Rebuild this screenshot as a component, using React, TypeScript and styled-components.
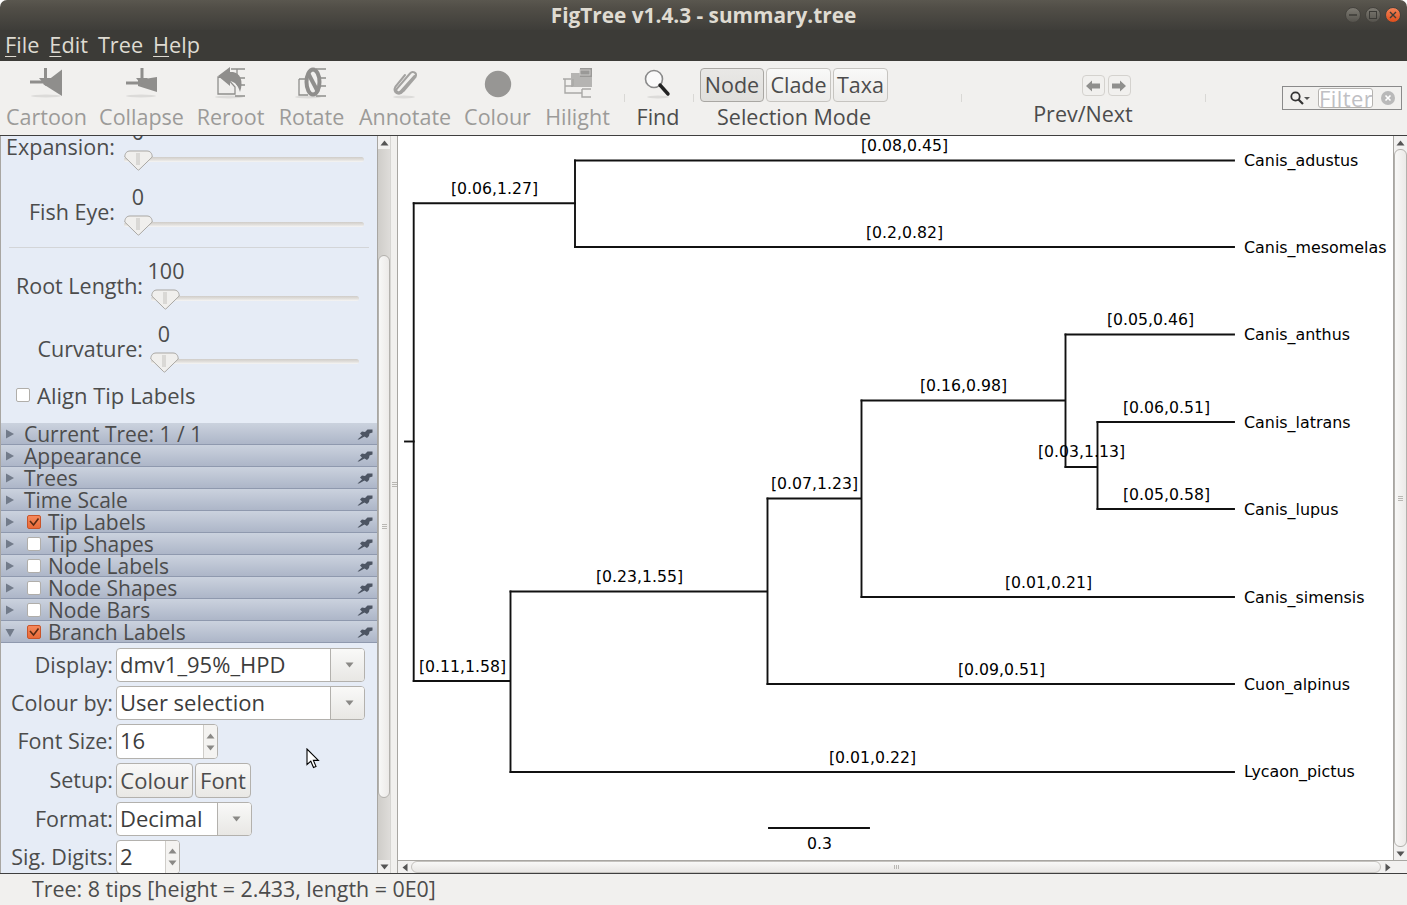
import React from "react";
import styled, { createGlobalStyle } from "styled-components";

const UI_FONT = `"Open Sans", "Noto Sans", "Liberation Sans", sans-serif`;

const GlobalStyle = createGlobalStyle`
  html, body {
    margin: 0;
    padding: 0;
    background: #fff;
    overflow: hidden;
  }
  * { box-sizing: border-box; }
`;

const Window = styled.div`
  width: 1407px;
  height: 905px;
  display: flex;
  flex-direction: column;
  position: relative;
  font-family: ${UI_FONT};
  color: #4c4c4c;
  background: #f1f0ee;
  border-radius: 7px 7px 0 0;
  overflow: hidden;
`;

const TitleBar = styled.div`
  height: 30px;
  flex: none;
  display: flex;
  align-items: center;
  justify-content: center;
  position: relative;
  padding-bottom: 1px;
  background: linear-gradient(#5a574f 0, #514e47 8px, #3e3d39 30px);
  color: #dfdbd2;
  font-size: 20.8px;
  font-weight: 700;
`;

const WindowButtons = styled.div`
  position: absolute;
  right: 6px;
  top: 7px;
  display: flex;
  gap: 4px;
`;

const WindowButton = styled.div<{ $close?: boolean }>`
  width: 16px;
  height: 16px;
  border-radius: 50%;
  display: flex;
  align-items: center;
  justify-content: center;
  border: 1px solid #45433e;
  background: ${(p) =>
    p.$close
      ? "linear-gradient(#f28257, #df4f1c)"
      : "linear-gradient(#7d7a72, #55534d)"};
`;

const MenuBar = styled.div`
  height: 31px;
  flex: none;
  display: flex;
  align-items: center;
  padding: 0 0 2px 5px;
  gap: 10px;
  background: #3c3b37;
  color: #dfdbd2;
  font-size: 21.7px;
`;

const MenuItem = styled.span`
  u { text-underline-offset: 3px; text-decoration-thickness: 1px; }
`;

const Toolbar = styled.div`
  height: 75px;
  flex: none;
  display: flex;
  align-items: stretch;
  background: #f1f0ee;
  border-bottom: 1px solid #3f3f3f;
  padding-left: 7px;
`;

const ToolItem = styled.div<{ $w: number; $ml?: number; $off?: boolean }>`
  width: ${(p) => p.$w}px;
  margin-left: ${(p) => p.$ml ?? 0}px;
  flex: none;
  display: flex;
  flex-direction: column;
  align-items: center;
  color: ${(p) => (p.$off ? "#9c9b99" : "#4c4c4c")};
  font-size: 21.5px;
  white-space: nowrap;
`;

const ToolIcon = styled.div`
  height: 38px;
  display: flex;
  align-items: flex-end;
  justify-content: center;
`;

const ToolLabel = styled.div`
  height: 29px;
  line-height: 29px;
  margin-top: 3px;
`;

const ToolSep = styled.div<{ $ml: number }>`
  width: 1px;
  height: 8px;
  margin: 33px 0 0 ${(p) => p.$ml}px;
  background: #d9d8d5;
  flex: none;
`;

const SegmentRow = styled.div`
  display: flex;
  gap: 2px;
  height: 34px;
  margin: 7px 0 -3px;
`;

const SegmentButton = styled.div<{ $w: number; $active?: boolean }>`
  width: ${(p) => p.$w}px;
  display: flex;
  align-items: center;
  justify-content: center;
  padding-bottom: 2px;
  border-radius: 4px;
  border: 1px solid ${(p) => (p.$active ? "#a9a7a3" : "#c6c4c0")};
  background: ${(p) =>
    p.$active ? "linear-gradient(#e9e8e6, #e0dfdc)" : "linear-gradient(#f9f9f8, #ecebe9)"};
`;

const NavRow = styled.div`
  display: flex;
  gap: 3px;
  height: 21px;
  margin: 14px 0 0 46px;
`;

const NavButton = styled.div`
  width: 23px;
  border: 1px solid #d4d2ce;
  border-radius: 4px;
  display: flex;
  align-items: center;
  justify-content: center;
  background: #f1f0ee;
`;

const FilterBox = styled.div`
  width: 120px;
  height: 24px;
  margin: 25px 0 0 76px;
  flex: none;
  border: 1px solid #8a8a8a;
  display: flex;
  align-items: center;
  padding-left: 6px;
`;

const FilterField = styled.div`
  width: 55px;
  height: 20px;
  margin-left: 7px;
  border: 1px solid #b5b3b0;
  border-radius: 3px;
  background: #fff;
  color: #c0c0c4;
  font-size: 22px;
  line-height: 18px;
  overflow: hidden;
  letter-spacing: 0.4px;
`;

const ClearIcon = styled.svg`
  margin-left: 8px;
  flex: none;
`;

const Body = styled.div`
  height: 737px;
  flex: none;
  display: flex;
`;

const Sidebar = styled.div`
  width: 377px;
  flex: none;
  background: #e6ecf6;
  border-left: 1px solid #a8a6a2;
  overflow: hidden;
  font-size: 21.5px;
`;

const SliderRow = styled.div<{ $h: number; $top?: number }>`
  display: flex;
  align-items: flex-start;
  height: ${(p) => p.$h}px;
  margin-top: ${(p) => p.$top ?? 0}px;
`;

const SliderLabel = styled.div<{ $w: number }>`
  width: ${(p) => p.$w}px;
  flex: none;
  text-align: right;
  margin-top: 15px;
  line-height: 26px;
  white-space: nowrap;
`;

const SliderCol = styled.div<{ $ml: number; $w: number }>`
  margin-left: ${(p) => p.$ml}px;
  width: ${(p) => p.$w}px;
  flex: none;
`;

const SliderValue = styled.div<{ $at: number }>`
  height: 26px;
  line-height: 26px;
  width: 28px;
  margin-left: ${(p) => p.$at}px;
  display: flex;
  justify-content: center;
`;

const SliderTrack = styled.div`
  height: 28px;
  display: flex;
  align-items: center;
  position: relative;
  &::before {
    content: "";
    height: 5px;
    width: 100%;
    border-radius: 3px;
    background: linear-gradient(#cfccc8, #e4e2df 60%, #f6f6f6);
  }
`;

const SliderThumb = styled.svg<{ $at: number }>`
  position: absolute;
  left: ${(p) => p.$at}px;
  top: 5px;
`;

const Divider = styled.div`
  height: 1px;
  margin-left: 8px;
  width: 360px;
  background: #d3d5d8;
`;

const CheckRow = styled.div`
  height: 22px;
  margin-bottom: 17px;
  display: flex;
  align-items: center;
  padding-left: 15px;
  gap: 7px;
  font-size: 22px;
`;

const CheckBox = styled.span<{ $on?: boolean }>`
  width: 14px;
  height: 14px;
  flex: none;
  border-radius: 2px;
  border: 1px solid ${(p) => (p.$on ? "#c9542a" : "#b0aeaa")};
  background: ${(p) => (p.$on ? "linear-gradient(#f5895c, #ea6a38)" : "#fff")};
  display: flex;
  align-items: center;
  justify-content: center;
`;

const SectionHeader = styled.div`
  height: 22px;
  display: flex;
  align-items: center;
  padding: 0 4px 0 4px;
  background: linear-gradient(#cbd2de, #adb6c8);
  border-bottom: 1px solid #8f99ae;
  font-size: 21px;
  line-height: 22px;
  white-space: nowrap;
`;

const SectionTitle = styled.span<{ $check?: boolean }>`
  margin-left: ${(p) => (p.$check ? 7 : 9)}px;
  flex: 1;
`;

const HeaderCheck = styled.span`
  margin-left: 12px;
  display: flex;
`;

const FormBlock = styled.div`
  display: flex;
  flex-direction: column;
  gap: 4px;
  padding-top: 5px;
`;

const FormRow = styled.div<{ $h: number }>`
  display: flex;
  height: ${(p) => p.$h}px;
  flex: none;
`;

const FormLabel = styled.div`
  width: 112px;
  flex: none;
  text-align: right;
  margin-right: 3px;
  line-height: 34px;
  white-space: nowrap;
`;

const Combo = styled.div<{ $w: number }>`
  width: ${(p) => p.$w}px;
  border: 1px solid #b3b1ad;
  border-radius: 4px;
  background: #fff;
  display: flex;
  overflow: hidden;
`;

const ComboText = styled.div`
  flex: 1;
  padding-left: 3px;
  line-height: 31px;
  font-size: 22px;
  color: #3c3c3c;
  white-space: nowrap;
`;

const ComboArrow = styled.div`
  width: 34px;
  padding-left: 3px;
  border-left: 1px solid #b3b1ad;
  background: linear-gradient(#f9f9f8, #e8e7e4);
  display: flex;
  align-items: center;
  justify-content: center;
`;

const SpinUpDown = styled.div`
  width: 14px;
  border-left: 1px solid #cfcdc9;
  background: #f4f3f1;
  display: flex;
  flex-direction: column;
  align-items: center;
  justify-content: center;
  gap: 6px;
`;

const SmallButton = styled.div<{ $w: number }>`
  width: ${(p) => p.$w}px;
  border: 1px solid #b3b1ad;
  border-radius: 4px;
  margin-right: 2px;
  padding-bottom: 2px;
  font-size: 22px;
  background: linear-gradient(#f9f9f8, #e9e8e5);
  display: flex;
  align-items: center;
  justify-content: center;
`;

const ScrollV = styled.div<{ $w: number }>`
  width: ${(p) => p.$w}px;
  flex: none;
  display: flex;
  flex-direction: column;
  background: #f2f1f0;
  border-left: 1px solid #a8a6a2;
`;

const ScrollEnd = styled.div`
  height: 13px;
  flex: none;
  display: flex;
  align-items: center;
  justify-content: center;
  background: #f2f1f0;
`;

const ScrollTrack = styled.div`
  flex: 1;
  display: flex;
  flex-direction: column;
  background: linear-gradient(90deg, #cfcdc9, #dedcd9);
`;

const ScrollThumb = styled.div<{ $top: number; $h: number }>`
  margin-top: ${(p) => p.$top}px;
  height: ${(p) => p.$h}px;
  flex: none;
  border: 1px solid #b3b1ad;
  border-radius: 6px;
  background: linear-gradient(90deg, #f8f8f7, #eceae8);
  display: flex;
  flex-direction: column;
  align-items: center;
  justify-content: center;
  gap: 1px;
`;

const GripMark = styled.span`
  width: 5px;
  height: 1px;
  background: #b9b7b3;
`;

const Splitter = styled.div`
  width: 7px;
  flex: none;
  background: #f1f0ee;
  border-left: 1px solid #d6d5d2;
  display: flex;
  flex-direction: column;
  align-items: center;
  justify-content: center;
  gap: 1px;
  padding-bottom: 40px;
`;

const MainPane = styled.div`
  flex: 1;
  display: flex;
  flex-direction: column;
  min-width: 0;
  border-left: 1px solid #a8a6a2;
`;

const CanvasRow = styled.div`
  flex: 1;
  display: flex;
  min-height: 0;
`;

const TreeCanvas = styled.svg`
  flex: 1;
  display: block;
  background: #fff;
  min-width: 0;
  font-family: "DejaVu Sans", sans-serif;
  font-size: 15.7px;
  fill: #000;
`;

const TipLabel = styled.text`
  font-size: 15.9px;
`;

const ScrollH = styled.div`
  height: 13px;
  flex: none;
  display: flex;
  background: #f2f1f0;
  border-top: 1px solid #a8a6a2;
  padding-right: 13px;
`;

const HEnd = styled.div`
  width: 13px;
  flex: none;
  display: flex;
  align-items: center;
  justify-content: center;
`;

const HThumb = styled.div`
  flex: 1;
  border: 1px solid #c4c2be;
  border-radius: 6px;
  background: linear-gradient(#f8f8f7, #e8e6e4);
  display: flex;
  align-items: center;
  justify-content: center;
  gap: 1px;
`;

const HGrip = styled.span`
  width: 1px;
  height: 4px;
  background: #b9b7b3;
`;

const StatusBar = styled.div`
  flex: 1;
  border-top: 1px solid #3f3f3f;
  padding-left: 32px;
  background: #f1f0ee;
  font-size: 21.4px;
  line-height: 30px;
`;

const Pointer = styled.svg`
  position: absolute;
  left: 306px;
  top: 748px;
`;

const GREY = "#8f8e8c";

const Shadow = ({ cx, cy, rx }: { cx: number; cy: number; rx: number }) => (
  <ellipse cx={cx} cy={cy} rx={rx} ry={1.5} fill="#dcdbd9" />
);

const CartoonIcon = () => (
  <svg width="36" height="32" viewBox="0 0 36 32">
    <Shadow cx={17} cy={29} rx={15} />
    <path d="M33 2.5 V29 L14 17 Z" fill={GREY} />
    <path d="M1 15 H15 M16.5 1 V14" stroke={GREY} strokeWidth="3" fill="none" />
    <path d="M10 11 H23 L16.5 19 Z" fill={GREY} />
  </svg>
);

const CollapseIcon = () => (
  <svg width="36" height="32" viewBox="0 0 36 32">
    <Shadow cx={17} cy={29} rx={15} />
    <path d="M33 10 V25 L14 19 L14 13 Z" fill={GREY} />
    <path d="M2 16 H15 M18 1 V13" stroke={GREY} strokeWidth="3" fill="none" />
    <path d="M12 11 H24 L18 18 Z" fill={GREY} />
  </svg>
);

const RerootIcon = () => (
  <svg width="36" height="32" viewBox="0 0 36 32">
    <Shadow cx={16} cy={30} rx={14} />
    <path d="M5 10 V27 H22 V20 L14 11 Z" fill="#efeeec" stroke={GREY} strokeWidth="1.3" />
    <path d="M18 2 H32 M24 11 H32 M24 18 H32 M22 29 H32 M24 2 V18" stroke={GREY} strokeWidth="1.3" fill="none" />
    <path d="M17 0 V5 H20 C27 6 31 14 27 25 C25 18 22 15 17 14 V19 L5 9 Z" fill={GREY} />
  </svg>
);

const RotateIcon = () => (
  <svg width="36" height="32" viewBox="0 0 36 32">
    <Shadow cx={14} cy={30} rx={13} />
    <path d="M5 12 H14 M5 12 V28 H14 M22 2 H32 M25 11 H32 M25 19 H32 M22 29 H32" stroke={GREY} strokeWidth="1.3" fill="none" />
    <ellipse cx="19" cy="15" rx="6.5" ry="12.5" fill="none" stroke={GREY} strokeWidth="4" />
    <path d="M14 6 L24 25" stroke={GREY} strokeWidth="4" />
  </svg>
);

const AnnotateIcon = () => (
  <svg width="30" height="32" viewBox="0 0 30 32">
    <Shadow cx={14} cy={30} rx={11} />
    <path
      d="M24.5 9 L11 24 C8.5 26.8 5 24.5 7 21.5 L20 6.5 C22.5 3.5 27.5 5.5 25.5 10 L13.5 24 C9.5 29 2 26 5.5 19.5 L15 8"
      stroke="#a3a2a0"
      strokeWidth="2"
      fill="none"
      strokeLinecap="round"
    />
  </svg>
);

const ColourIcon = () => (
  <svg width="28" height="30" viewBox="0 0 28 30">
    <circle cx="14" cy="15" r="13.2" fill="#979694" />
  </svg>
);

const HilightIcon = () => (
  <svg width="32" height="32" viewBox="0 0 32 32">
    <rect x="9" y="6" width="21" height="14" fill="#b5b4b2" />
    <rect x="18" y="1" width="12" height="9" fill="#9a9997" />
    <rect x="18" y="3" width="10" height="5" fill="none" stroke="#c9c8c6" strokeWidth="1" />
    <path d="M1 12 H9 M3 12 V26 H20 M3 19 H11 M20 22 H29 M20 22 V30 H29 M11 12 V19" stroke="#a9a8a6" strokeWidth="1.4" fill="none" />
  </svg>
);

const FindIcon = () => (
  <svg width="30" height="32" viewBox="0 0 30 32">
    <Shadow cx={15} cy={30} rx={11} />
    <circle cx="11" cy="12" r="8.5" fill="#fafafa" stroke="#8a8a8a" strokeWidth="1.6" />
    <path d="M17 18 L25 27" stroke="#222" strokeWidth="3.4" strokeLinecap="round" />
  </svg>
);

const Chevron = ({ dir }: { dir: "left" | "right" }) => (
  <svg width="16" height="12" viewBox="0 0 16 12">
    {dir === "left" ? (
      <path d="M1 6 L7 0.5 V3.5 H15 V8.5 H7 V11.5 Z" fill="#8f8f8d" />
    ) : (
      <path d="M15 6 L9 0.5 V3.5 H1 V8.5 H9 V11.5 Z" fill="#8f8f8d" />
    )}
  </svg>
);

const Thumb = ({ at }: { at: number }) => (
  <SliderThumb $at={at} width="29" height="21" viewBox="0 0 29 21">
    <path
      d="M0.8 7 C0.8 3 3 1 6 1 H23 C26 1 28.2 3 28.2 7 L15 19.8 C14.6 20.2 14.2 20.2 13.8 19.8 Z"
      fill="#f0efed"
      stroke="#a9a7a3"
      strokeWidth="1"
    />
    <path d="M13 3 V15 M15 3 V15" stroke="#c3c1bd" strokeWidth="1" />
  </SliderThumb>
);

const Pin = () => (
  <svg width="16" height="12" viewBox="0 0 16 12">
    <path
      d="M0.5 11.5 L5 7.5 L3 5.5 L5 3.5 L8 4 L10.5 1.5 L15.5 1.5 L15.5 4.5 L12.5 5.5 L12 8 L10 10 L7.5 8.5 L2 11.5 Z"
      fill="#4d5563"
    />
  </svg>
);

const Caret = ({ open }: { open?: boolean }) => (
  <svg width="10" height="12" viewBox="0 0 10 12">
    {open ? <path d="M0.5 3 H9.5 L5 11 Z" fill="#727b8a" /> : <path d="M1 1.5 L9 6 L1 10.5 Z" fill="#727b8a" />}
  </svg>
);

const Tick = () => (
  <svg width="12" height="12" viewBox="0 0 12 12">
    <path d="M2 5 L5.5 9 L10.5 2.5" stroke="#5b2a14" strokeWidth="1.6" fill="none" />
  </svg>
);

const DownArrow = ({ color = "#8a8986" }: { color?: string }) => (
  <svg width="9" height="6" viewBox="0 0 9 6">
    <path d="M0.5 0.5 H8.5 L4.5 5.5 Z" fill={color} />
  </svg>
);

const UpArrow = ({ color = "#8a8986" }: { color?: string }) => (
  <svg width="9" height="6" viewBox="0 0 9 6">
    <path d="M0.5 5.5 H8.5 L4.5 0.5 Z" fill={color} />
  </svg>
);

const sections: { title: string; check?: "on" | "off"; open?: boolean }[] = [
  { title: "Current Tree: 1 / 1" },
  { title: "Appearance" },
  { title: "Trees" },
  { title: "Time Scale" },
  { title: "Tip Labels", check: "on" },
  { title: "Tip Shapes", check: "off" },
  { title: "Node Labels", check: "off" },
  { title: "Node Shapes", check: "off" },
  { title: "Node Bars", check: "off" },
  { title: "Branch Labels", check: "on", open: true },
];

// x1,y1,x2,y2 in page pixels, the viewBox of the canvas starts at the pane corner
const branches = [
  [405, 441.5, 413.7, 441.5],
  [413.7, 203.3, 413.7, 681],
  [413.7, 203.3, 575, 203.3],
  [575, 160.5, 575, 247],
  [575, 160.5, 1234, 160.5],
  [575, 247, 1234, 247],
  [413.7, 681, 510, 681],
  [510.5, 591.5, 510.5, 772],
  [510.5, 591.5, 767, 591.5],
  [510.5, 772, 1234, 772],
  [767.5, 498.5, 767.5, 684],
  [767.5, 498.5, 861, 498.5],
  [767.5, 684, 1234, 684],
  [861.5, 400.5, 861.5, 597],
  [861.5, 400.5, 1065, 400.5],
  [861.5, 597, 1234, 597],
  [1065.5, 334.5, 1065.5, 467],
  [1065.5, 334.5, 1234, 334.5],
  [1065.5, 467, 1097, 467],
  [1097.5, 422, 1097.5, 509],
  [1097.5, 422, 1234, 422],
  [1097.5, 509, 1234, 509],
  [769, 828, 869, 828],
];

const branchLabels: [string, number, number][] = [
  ["[0.08,0.45]", 904.5, 145],
  ["[0.06,1.27]", 494.5, 188],
  ["[0.2,0.82]", 904.5, 232],
  ["[0.05,0.46]", 1150.5, 319],
  ["[0.16,0.98]", 963.5, 385],
  ["[0.06,0.51]", 1166.5, 407],
  ["[0.03,1.13]", 1081.5, 451],
  ["[0.07,1.23]", 814.5, 483],
  ["[0.05,0.58]", 1166.5, 494],
  ["[0.23,1.55]", 639.5, 576],
  ["[0.01,0.21]", 1048.5, 582],
  ["[0.11,1.58]", 462.5, 666],
  ["[0.09,0.51]", 1001.5, 669],
  ["[0.01,0.22]", 872.5, 757],
  ["0.3", 819.5, 843],
];

const tips: [string, number][] = [
  ["Canis_adustus", 160],
  ["Canis_mesomelas", 247],
  ["Canis_anthus", 334],
  ["Canis_latrans", 422],
  ["Canis_lupus", 509],
  ["Canis_simensis", 597],
  ["Cuon_alpinus", 684],
  ["Lycaon_pictus", 771],
];

const App: React.FC = () => (
  <Window>
    <GlobalStyle />
    <TitleBar>
      FigTree v1.4.3 - summary.tree
      <WindowButtons>
        <WindowButton>
          <svg width="10" height="10" viewBox="0 0 10 10">
            <path d="M1 5 H9" stroke="#3c3b37" strokeWidth="1.4" />
          </svg>
        </WindowButton>
        <WindowButton>
          <svg width="10" height="10" viewBox="0 0 10 10">
            <rect x="1.5" y="1.5" width="7" height="7" fill="none" stroke="#3c3b37" strokeWidth="1" />
          </svg>
        </WindowButton>
        <WindowButton $close>
          <svg width="10" height="10" viewBox="0 0 10 10">
            <path d="M2 2 L8 8 M8 2 L2 8" stroke="#3c3b37" strokeWidth="1.4" />
          </svg>
        </WindowButton>
      </WindowButtons>
    </TitleBar>
    <MenuBar>
      <MenuItem>
        <u>F</u>ile
      </MenuItem>
      <MenuItem>
        <u>E</u>dit
      </MenuItem>
      <MenuItem>Tree</MenuItem>
      <MenuItem>
        <u>H</u>elp
      </MenuItem>
    </MenuBar>

    <Toolbar>
      <ToolItem $w={79} $off>
        <ToolIcon>
          <CartoonIcon />
        </ToolIcon>
        <ToolLabel>Cartoon</ToolLabel>
      </ToolItem>
      <ToolItem $w={85} $ml={13} $off>
        <ToolIcon>
          <CollapseIcon />
        </ToolIcon>
        <ToolLabel>Collapse</ToolLabel>
      </ToolItem>
      <ToolItem $w={67} $ml={13} $off>
        <ToolIcon>
          <RerootIcon />
        </ToolIcon>
        <ToolLabel>Reroot</ToolLabel>
      </ToolItem>
      <ToolItem $w={67} $ml={14} $off>
        <ToolIcon>
          <RotateIcon />
        </ToolIcon>
        <ToolLabel>Rotate</ToolLabel>
      </ToolItem>
      <ToolItem $w={94} $ml={13} $off>
        <ToolIcon>
          <AnnotateIcon />
        </ToolIcon>
        <ToolLabel>Annotate</ToolLabel>
      </ToolItem>
      <ToolItem $w={65} $ml={13} $off>
        <ToolIcon>
          <ColourIcon />
        </ToolIcon>
        <ToolLabel>Colour</ToolLabel>
      </ToolItem>
      <ToolItem $w={67} $ml={14} $off>
        <ToolIcon>
          <HilightIcon />
        </ToolIcon>
        <ToolLabel>Hilight</ToolLabel>
      </ToolItem>
      <ToolSep $ml={13} />
      <ToolItem $w={44} $ml={11}>
        <ToolIcon>
          <FindIcon />
        </ToolIcon>
        <ToolLabel>Find</ToolLabel>
      </ToolItem>
      <ToolSep $ml={13} />
      <ToolItem $w={188} $ml={6}>
        <SegmentRow>
          <SegmentButton $w={64} $active>
            Node
          </SegmentButton>
          <SegmentButton $w={65}>Clade</SegmentButton>
          <SegmentButton $w={55}>Taxa</SegmentButton>
        </SegmentRow>
        <ToolLabel>Selection Mode</ToolLabel>
      </ToolItem>
      <ToolSep $ml={73} />
      <ToolItem $w={242}>
        <NavRow>
          <NavButton>
            <Chevron dir="left" />
          </NavButton>
          <NavButton>
            <Chevron dir="right" />
          </NavButton>
        </NavRow>
        <ToolLabel>Prev/Next</ToolLabel>
      </ToolItem>
      <ToolSep $ml={1} />
      <FilterBox>
        <svg width="22" height="16" viewBox="0 0 22 16">
          <circle cx="6.5" cy="6.5" r="4.2" fill="none" stroke="#333" strokeWidth="1.8" />
          <path d="M9.5 9.5 L14 14" stroke="#333" strokeWidth="2.2" />
          <path d="M15 7 H21 L18 10 Z" fill="#555" />
        </svg>
        <FilterField>Filter</FilterField>
        <ClearIcon width="14" height="14" viewBox="0 0 14 14">
          <circle cx="7" cy="7" r="7" fill="#b9b9b9" />
          <path d="M4.5 4.5 L9.5 9.5 M9.5 4.5 L4.5 9.5" stroke="#fff" strokeWidth="1.6" />
        </ClearIcon>
      </FilterBox>
    </Toolbar>

    <Body>
      <Sidebar>
        <SliderRow $h={65} $top={-17}>
          <SliderLabel $w={114}>Expansion:</SliderLabel>
          <SliderCol $ml={9} $w={240}>
            <SliderValue $at={0}>0</SliderValue>
            <SliderTrack>
              <Thumb at={0} />
            </SliderTrack>
          </SliderCol>
        </SliderRow>
        <SliderRow $h={63}>
          <SliderLabel $w={114}>Fish Eye:</SliderLabel>
          <SliderCol $ml={9} $w={240}>
            <SliderValue $at={0}>0</SliderValue>
            <SliderTrack>
              <Thumb at={0} />
            </SliderTrack>
          </SliderCol>
        </SliderRow>
        <Divider />
        <SliderRow $h={63} $top={10}>
          <SliderLabel $w={142}>Root Length:</SliderLabel>
          <SliderCol $ml={8} $w={208}>
            <SliderValue $at={1}>100</SliderValue>
            <SliderTrack>
              <Thumb at={0} />
            </SliderTrack>
          </SliderCol>
        </SliderRow>
        <SliderRow $h={63}>
          <SliderLabel $w={142}>Curvature:</SliderLabel>
          <SliderCol $ml={8} $w={208}>
            <SliderValue $at={-1}>0</SliderValue>
            <SliderTrack>
              <Thumb at={-1} />
            </SliderTrack>
          </SliderCol>
        </SliderRow>
        <CheckRow>
          <CheckBox />
          Align Tip Labels
        </CheckRow>

        {sections.map((s) => (
          <SectionHeader key={s.title}>
            <Caret open={s.open} />
            {s.check && (
              <HeaderCheck>
                <CheckBox $on={s.check === "on"}>{s.check === "on" && <Tick />}</CheckBox>
              </HeaderCheck>
            )}
            <SectionTitle $check={!!s.check}>{s.title}</SectionTitle>
            <Pin />
          </SectionHeader>
        ))}

        <FormBlock>
          <FormRow $h={34}>
            <FormLabel>Display:</FormLabel>
            <Combo $w={249}>
              <ComboText>dmv1_95%_HPD</ComboText>
              <ComboArrow>
                <DownArrow />
              </ComboArrow>
            </Combo>
          </FormRow>
          <FormRow $h={34}>
            <FormLabel>Colour by:</FormLabel>
            <Combo $w={249}>
              <ComboText>User selection</ComboText>
              <ComboArrow>
                <DownArrow />
              </ComboArrow>
            </Combo>
          </FormRow>
          <FormRow $h={35}>
            <FormLabel>Font Size:</FormLabel>
            <Combo $w={102}>
              <ComboText>16</ComboText>
              <SpinUpDown>
                <UpArrow />
                <DownArrow />
              </SpinUpDown>
            </Combo>
          </FormRow>
          <FormRow $h={35}>
            <FormLabel>Setup:</FormLabel>
            <SmallButton $w={77}>Colour</SmallButton>
            <SmallButton $w={56}>Font</SmallButton>
          </FormRow>
          <FormRow $h={34}>
            <FormLabel>Format:</FormLabel>
            <Combo $w={136}>
              <ComboText>Decimal</ComboText>
              <ComboArrow>
                <DownArrow />
              </ComboArrow>
            </Combo>
          </FormRow>
          <FormRow $h={34}>
            <FormLabel>Sig. Digits:</FormLabel>
            <Combo $w={64}>
              <ComboText>2</ComboText>
              <SpinUpDown>
                <UpArrow />
                <DownArrow />
              </SpinUpDown>
            </Combo>
          </FormRow>
        </FormBlock>
      </Sidebar>

      <ScrollV $w={13}>
        <ScrollEnd>
          <UpArrow color="#555" />
        </ScrollEnd>
        <ScrollTrack>
          <ScrollThumb $top={106} $h={543}>
            <GripMark />
            <GripMark />
            <GripMark />
          </ScrollThumb>
        </ScrollTrack>
        <ScrollEnd>
          <DownArrow color="#555" />
        </ScrollEnd>
      </ScrollV>
      <Splitter>
        <GripMark />
        <GripMark />
        <GripMark />
      </Splitter>

      <MainPane>
        <CanvasRow>
          <TreeCanvas viewBox="398 136 995 724">
            {branches.map(([x1, y1, x2, y2], i) => (
              <line
                key={i}
                x1={x1}
                y1={y1}
                x2={x2}
                y2={y2}
                stroke="#111"
                strokeWidth="1.9"
                strokeLinecap="square"
              />
            ))}
            {branchLabels.map(([t, x, y]) => (
              <text key={t} x={x} y={y} textAnchor="middle" dominantBaseline="central">
                {t}
              </text>
            ))}
            {tips.map(([t, y]) => (
              <TipLabel key={t} x={1244} y={y} dominantBaseline="central">
                {t}
              </TipLabel>
            ))}
          </TreeCanvas>
          <ScrollV $w={14}>
            <ScrollEnd>
              <UpArrow color="#555" />
            </ScrollEnd>
            <ScrollThumb $top={0} $h={698}>
              <GripMark />
              <GripMark />
              <GripMark />
            </ScrollThumb>
            <ScrollEnd>
              <DownArrow color="#555" />
            </ScrollEnd>
          </ScrollV>
        </CanvasRow>
        <ScrollH>
          <HEnd>
            <svg width="6" height="9" viewBox="0 0 6 9">
              <path d="M5.5 0.5 V8.5 L0.5 4.5 Z" fill="#555" />
            </svg>
          </HEnd>
          <HThumb>
            <HGrip />
            <HGrip />
            <HGrip />
          </HThumb>
          <HEnd>
            <svg width="6" height="9" viewBox="0 0 6 9">
              <path d="M0.5 0.5 V8.5 L5.5 4.5 Z" fill="#555" />
            </svg>
          </HEnd>
        </ScrollH>
      </MainPane>
    </Body>

    <StatusBar>Tree: 8 tips [height = 2.433, length = 0E0]</StatusBar>

    <Pointer width="14" height="21" viewBox="0 0 14 21">
      <path d="M1 1 V16.5 L4.8 13.2 L7.5 19.5 L10 18.4 L7.4 12.4 H12.4 Z" fill="#fff" stroke="#000" strokeWidth="1.1" />
    </Pointer>
  </Window>
);

export default App;
